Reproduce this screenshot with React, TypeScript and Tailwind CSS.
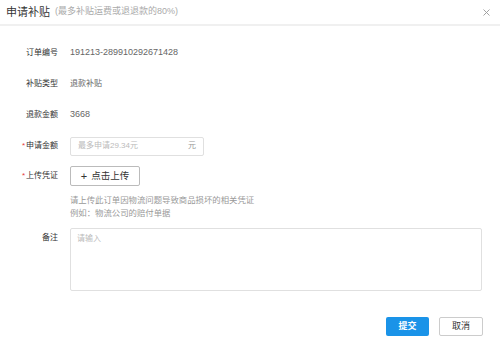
import React from 'react';

const font = "font-['Liberation_Sans','Noto_Sans_CJK_SC',sans-serif]";

const Row: React.FC<{ label: string; required?: boolean; className?: string; children: React.ReactNode }> = ({
  label,
  required,
  className = 'h-[20px] items-center',
  children
}) => (
  <div className={`flex ${className}`}>
    <div className="w-[58px] shrink-0 flex items-center justify-end h-[20px] text-[8px] text-[#333]">
      {required && <span className="text-[#e4393c] mr-[1px]">*</span>}
      {label}
    </div>
    <div className="ml-[12px] flex-1 flex items-center">{children}</div>
  </div>
);

export default function App() {
  return (
    <div className={`relative w-[500px] h-[349px] bg-white overflow-hidden ${font}`}>
      <div className="flex items-center h-[26px] px-[6px] border-b-2 border-[#f0f0f0]">
        <span className="text-[11px] text-[#333]">申请补贴</span>
        <span className="ml-[5px] text-[9px] text-[#aaa]">(最多补贴运费或退退款的80%)</span>
        <svg className="absolute right-[10px] top-[9px]" width="7" height="7" viewBox="0 0 7 7">
          <path d="M0.5 0.5L6.5 6.5M6.5 0.5L0.5 6.5" stroke="#999" strokeWidth="0.9" />
        </svg>
      </div>

      <div className="pt-[17px] flex flex-col">
        <Row label="订单编号">
          <span className="text-[9px] text-[#666]">191213-289910292671428</span>
        </Row>
        <div className="mt-[11px]">
          <Row label="补贴类型">
            <span className="text-[8px] text-[#666]">退款补贴</span>
          </Row>
        </div>
        <div className="mt-[11px]">
          <Row label="退款金额">
            <span className="text-[9px] text-[#666]">3668</span>
          </Row>
        </div>
        <div className="mt-[11px]">
          <Row label="申请金额" required className="h-[20px] items-center">
            <div className="flex items-center justify-between w-[134px] h-[19px] border border-[#e0e0e0] rounded-[2px] px-[7px]">
              <span className="text-[8px] text-[#bbb]">最多申请29.34元</span>
              <span className="text-[8px] text-[#999]">元</span>
            </div>
          </Row>
        </div>
        <div className="mt-[10px]">
          <Row label="上传凭证" required className="h-[20px] items-center">
            <div className="flex items-center justify-center w-[70px] h-[20px] border border-[#bbb] rounded-[2px] text-[9.5px] text-[#333]">
              <span className="mr-[4px] text-[11px] font-light leading-none">+</span>
              点击上传
            </div>
          </Row>
        </div>
        <div className="ml-[70px] mt-[8px] text-[8.4px] leading-[13px] text-[#999]">
          <div>请上传此订单因物流问题导致商品损坏的相关凭证</div>
          <div>例如：物流公司的赔付单据</div>
        </div>
        <div className="mt-[8px]">
          <Row label="备注" className="items-start">
            <div className="w-[412px] h-[63px] border border-[#e0e0e0] rounded-[2px] px-[6px] pt-[4px] text-[8px] text-[#bbb]">
              请输入
            </div>
          </Row>
        </div>
        <div className="flex justify-end gap-[10px] pr-[17px] mt-[26px]">
          <button className="w-[43px] h-[19px] rounded-[2px] bg-[#1a93e8] text-white text-[9px] font-bold">提交</button>
          <button className="w-[44px] h-[19px] rounded-[2px] border border-[#ccc] bg-white text-[#333] text-[9px]">取消</button>
        </div>
      </div>
    </div>
  );
}
